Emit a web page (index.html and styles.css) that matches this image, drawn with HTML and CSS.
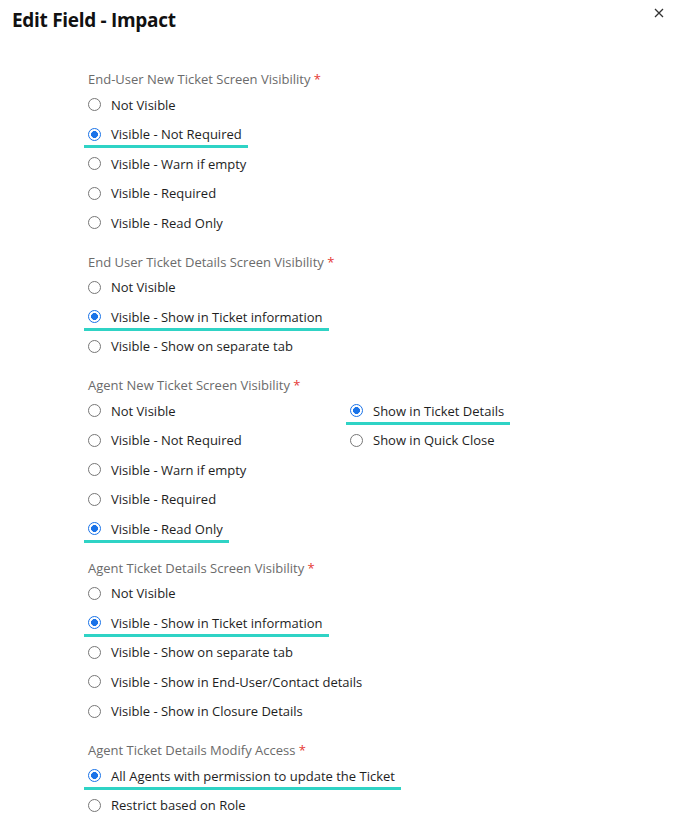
FILE: index.html
```html
<!doctype html>
<html lang="en">
<head>
<meta charset="UTF-8">
<title>Edit Field - Impact</title>
<link rel="stylesheet" href="styles.css">
</head>
<body>
<div class="dialog">
	<div class="head">
		<h1 class="title">Edit Field - Impact</h1>
		<svg class="close" width="10" height="10" viewBox="0 0 10 10"><path d="M1 1L9 9M9 1L1 9" stroke="#333" stroke-width="1.3" fill="none"/></svg>
	</div>
	<div class="body">
		<div class="group">
			<div class="label">End-User New Ticket Screen Visibility <span class="req">*</span></div>
			<div class="opts">
				<div class="col">
					<label class="opt"><span class="radio"></span>Not Visible</label>
					<label class="opt on"><span class="radio"></span>Visible - Not Required</label>
					<label class="opt"><span class="radio"></span>Visible - Warn if empty</label>
					<label class="opt"><span class="radio"></span>Visible - Required</label>
					<label class="opt"><span class="radio"></span>Visible - Read Only</label>
				</div>
			</div>
		</div>
		<div class="group">
			<div class="label">End User Ticket Details Screen Visibility <span class="req">*</span></div>
			<div class="opts">
				<div class="col">
					<label class="opt"><span class="radio"></span>Not Visible</label>
					<label class="opt on"><span class="radio"></span>Visible - Show in Ticket information</label>
					<label class="opt"><span class="radio"></span>Visible - Show on separate tab</label>
				</div>
			</div>
		</div>
		<div class="group">
			<div class="label">Agent New Ticket Screen Visibility <span class="req">*</span></div>
			<div class="opts">
				<div class="col first">
					<label class="opt"><span class="radio"></span>Not Visible</label>
					<label class="opt"><span class="radio"></span>Visible - Not Required</label>
					<label class="opt"><span class="radio"></span>Visible - Warn if empty</label>
					<label class="opt"><span class="radio"></span>Visible - Required</label>
					<label class="opt on"><span class="radio"></span>Visible - Read Only</label>
				</div>
				<div class="col">
					<label class="opt on"><span class="radio"></span>Show in Ticket Details</label>
					<label class="opt"><span class="radio"></span>Show in Quick Close</label>
				</div>
			</div>
		</div>
		<div class="group">
			<div class="label">Agent Ticket Details Screen Visibility <span class="req">*</span></div>
			<div class="opts">
				<div class="col">
					<label class="opt"><span class="radio"></span>Not Visible</label>
					<label class="opt on"><span class="radio"></span>Visible - Show in Ticket information</label>
					<label class="opt"><span class="radio"></span>Visible - Show on separate tab</label>
					<label class="opt"><span class="radio"></span>Visible - Show in End-User/Contact details</label>
					<label class="opt"><span class="radio"></span>Visible - Show in Closure Details</label>
				</div>
			</div>
		</div>
		<div class="group">
			<div class="label">Agent Ticket Details Modify Access <span class="req">*</span></div>
			<div class="opts">
				<div class="col">
					<label class="opt on"><span class="radio"></span>All Agents with permission to update the Ticket</label>
					<label class="opt"><span class="radio"></span>Restrict based on Role</label>
				</div>
			</div>
		</div>
	</div>
</div>
</body>
</html>
```

FILE: styles.css
```css
*{ margin:0px; padding:0px;}
body{
	background-color:#fff;
	font-family:"Open Sans","Liberation Sans",sans-serif;
	color:#222;
}
.dialog{
	width:676px;
}
.head{
	display:flex;
	justify-content:space-between;
	align-items:flex-start;
	padding:8px 12px 0 12px;
	height:52px;
}
.title{
	font-size:19px;
	font-weight:700;
	color:#111;
	line-height:24px;
	letter-spacing:-0.3px;
}
.close{
	margin-top:0px;
	margin-right:0px;
}
.body{
	padding:10px 0 0 88px;
}
.group{
	margin-bottom:15px;
}
.label{
	font-size:13px;
	color:#6b6b6b;
	line-height:18px;
	margin-bottom:2px;
}
.req{
	color:#e53935;
}
.opts{
	display:flex;
}
.col{
	display:flex;
	flex-direction:column;
	align-items:flex-start;
}
.col.first{
	width:262px;
}
.opt{
	position:relative;
	display:inline-flex;
	align-items:center;
	height:29.5px;
	font-size:13px;
	color:#1e1e1e;
}
.radio{
	width:13px;
	height:13px;
	border:1px solid #777;
	border-radius:50%;
	margin-right:10px;
	box-sizing:border-box;
}
.opt.on .radio{
	border:1.5px solid #1a73e8;
	background:radial-gradient(circle,#1a73e8 0,#1a73e8 3.2px,#fff 3.7px);
}
.opt.on::after{
	content:"";
	position:absolute;
	left:-4px;
	right:-6px;
	bottom:1px;
	height:3px;
	background-color:#2fd3c5;
}
```
